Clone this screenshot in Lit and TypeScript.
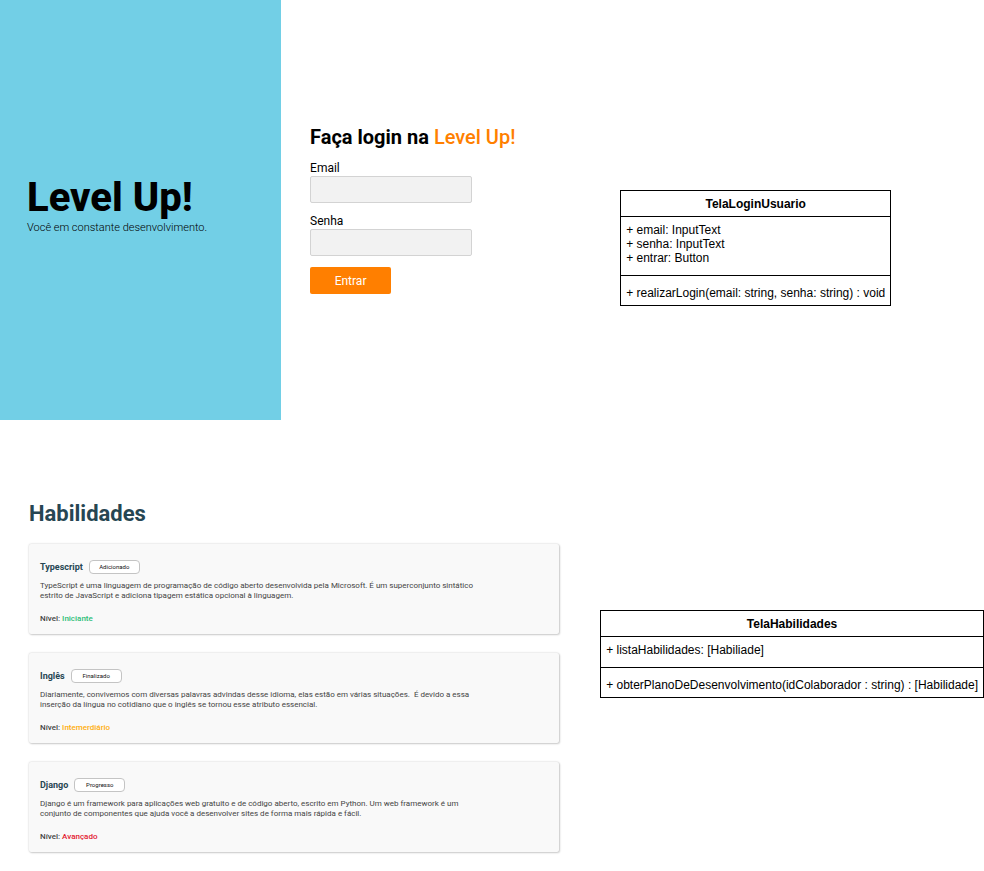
import { LitElement, html, css } from "lit";
import { customElement, property } from "lit/decorators.js";

interface Skill {
  name: string;
  status: string;
  description: string;
  level: string;
  tone: "green" | "amber" | "red";
}

const SKILLS: Skill[] = [
  {
    name: "Typescript",
    status: "Adicionado",
    description:
      "TypeScript é uma linguagem de programação de código aberto desenvolvida pela Microsoft. É um superconjunto sintático estrito de JavaScript e adiciona tipagem estática opcional à linguagem.",
    level: "Iniciante",
    tone: "green",
  },
  {
    name: "Inglês",
    status: "Finalizado",
    description:
      "Diariamente, convivemos com diversas palavras advindas desse idioma, elas estão em várias situações.\u00a0 É devido a essa inserção da língua no cotidiano que o inglês se tornou esse atributo essencial.",
    level: "Intemerdiário",
    tone: "amber",
  },
  {
    name: "Django",
    status: "Progresso",
    description:
      "Django é um framework para aplicações web gratuito e de código aberto, escrito em Python. Um web framework é um conjunto de componentes que ajuda você a desenvolver sites de forma mais rápida e fácil.",
    level: "Avançado",
    tone: "red",
  },
];

@customElement("class-diagram")
export class ClassDiagram extends LitElement {
  @property() name = "";
  @property({ attribute: false }) fields: string[] = [];
  @property({ attribute: false }) methods: string[] = [];

  static styles = css`
    :host {
      display: block;
      width: max-content;
      box-sizing: border-box;
      border: 1px solid #000;
      background: #fff;
      color: #000;
      font: 12px/14px "Liberation Sans", Arial, sans-serif;
    }
    .name {
      margin: 0;
      padding-top: 2px;
      font-size: 12px;
      line-height: 23px;
      text-align: center;
    }
    .members {
      list-style: none;
      margin: 0;
      padding: 6px 5px 10px;
      border-top: 1px solid #000;
      white-space: nowrap;
    }
    .methods {
      padding: 10px 5px 5px;
    }
  `;

  render() {
    return html`
      <h3 class="name">${this.name}</h3>
      <ul class="members">${this.fields.map((f) => html`<li>${f}</li>`)}</ul>
      <ul class="members methods">${this.methods.map((m) => html`<li>${m}</li>`)}</ul>
    `;
  }
}

@customElement("skill-card")
export class SkillCard extends LitElement {
  @property({ attribute: false }) skill!: Skill;

  static styles = css`
    :host {
      display: block;
      padding: 16px 11px 10px;
      border-radius: 2px;
      background: #f9f9f9;
      box-shadow: 0 0 2px rgba(0, 0, 0, 0.22), 1px 1px 2px rgba(0, 0, 0, 0.16);
      color: #444;
      font-size: 8px;
      line-height: 10px;
    }
    .head {
      display: flex;
      align-items: center;
      gap: 6px;
    }
    .name {
      margin: 0;
      font-size: 9px;
      font-weight: 700;
      color: #264653;
    }
    .status {
      box-sizing: border-box;
      width: 51px;
      height: 14px;
      border: 1px solid #c4c4c4;
      border-radius: 4px;
      background: #fff;
      color: #111;
      font-size: 6px;
      line-height: 12px;
      text-align: center;
    }
    .description {
      max-width: 446px;
      margin: 7px 0 13px;
    }
    .level {
      margin: 0;
      font-weight: 500;
    }
    .green { color: #2dbe78; }
    .amber { color: #ffae0d; }
    .red { color: #e3172f; }
  `;

  render() {
    const s = this.skill;
    return html`
      <div class="head">
        <h3 class="name">${s.name}</h3>
        <span class="status">${s.status}</span>
      </div>
      <p class="description">${s.description}</p>
      <p class="level">Nível: <span class=${s.tone}>${s.level}</span></p>
    `;
  }
}

@customElement("app-root")
export class AppRoot extends LitElement {
  static styles = css`
    :host {
      display: grid;
      grid-template-columns: minmax(0, 1fr) max-content;
      column-gap: 38px;
      background: #fff;
      color: #000;
      font-family: Roboto, "Liberation Sans", sans-serif;
    }
    .login {
      display: grid;
      grid-template-columns: 1fr 1fr;
      min-height: 420px;
    }
    .brand {
      display: flex;
      flex-direction: column;
      justify-content: center;
      padding: 0 27px 10px;
      background: #72cfe6;
    }
    .logo {
      margin: 0;
      font-size: 40px;
      line-height: 46px;
      font-weight: 800;
      white-space: nowrap;
    }
    .tagline {
      margin: 0;
      font-size: 11px;
      line-height: 14px;
      font-weight: 300;
      white-space: nowrap;
    }
    .form {
      display: flex;
      flex-direction: column;
      justify-content: center;
      align-items: flex-start;
      padding: 0 0 1px 29px;
      font-size: 12px;
      line-height: 14px;
    }
    .title {
      margin: 0 0 12px;
      font-size: 20px;
      line-height: 24px;
      font-weight: 700;
      white-space: nowrap;
    }
    .accent {
      color: #ff7f00;
      font-weight: 500;
    }
    .input {
      box-sizing: border-box;
      width: 162px;
      height: 27px;
      margin: 1px 0 11px;
      padding: 0 8px;
      border: 1px solid #d3d3d3;
      border-radius: 2px;
      background: #f2f2f2;
      font: inherit;
    }
    .submit {
      width: 81px;
      height: 27px;
      padding: 0;
      border: 0;
      border-radius: 2px;
      background: #ff7f00;
      color: #fff;
      font: inherit;
    }
    .diagram {
      padding-top: 190px;
    }
    .indented {
      padding-left: 20px;
    }
    .skills {
      display: flex;
      flex-direction: column;
      gap: 19px;
      padding: 83px 3px 19px 29px;
    }
    .heading {
      margin: 0;
      font-size: 22px;
      line-height: 22px;
      font-weight: 700;
      color: #264653;
    }
  `;

  render() {
    return html`
      <section class="login">
        <header class="brand">
          <h1 class="logo">Level Up!</h1>
          <p class="tagline">Você em constante desenvolvimento.</p>
        </header>
        <form class="form" @submit=${(e: Event) => e.preventDefault()}>
          <h2 class="title">Faça login na <span class="accent">Level Up!</span></h2>
          <label for="email">Email</label>
          <input class="input" id="email" type="email" />
          <label for="senha">Senha</label>
          <input class="input" id="senha" type="password" />
          <button class="submit" type="submit">Entrar</button>
        </form>
      </section>
      <aside class="diagram indented">
        <class-diagram
          name="TelaLoginUsuario"
          .fields=${["+ email: InputText", "+ senha: InputText", "+ entrar: Button"]}
          .methods=${["+ realizarLogin(email: string, senha: string) : void"]}
        ></class-diagram>
      </aside>
      <section class="skills">
        <h2 class="heading">Habilidades</h2>
        ${SKILLS.map((s) => html`<skill-card .skill=${s}></skill-card>`)}
      </section>
      <aside class="diagram">
        <class-diagram
          name="TelaHabilidades"
          .fields=${["+ listaHabilidades: [Habiliade]"]}
          .methods=${["+ obterPlanoDeDesenvolvimento(idColaborador : string) : [Habilidade]"]}
        ></class-diagram>
      </aside>
    `;
  }
}
